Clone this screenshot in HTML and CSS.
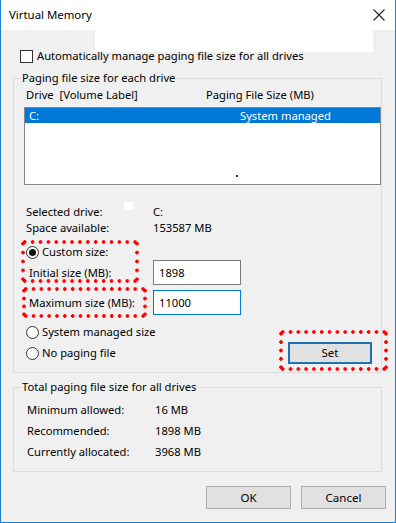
FILE: index.html
```html
<!DOCTYPE html>
<html>
<head>
<meta charset="utf-8">
<link rel="stylesheet" href="styles.css">
</head>
<body>
<div class="window">
  <div class="titlebar">
    <span class="title">Virtual Memory</span>
    <svg class="close" width="12" height="12" viewBox="0 0 12 12"><path d="M0.5 0.5 L11.5 11.5 M11.5 0.5 L0.5 11.5" stroke="#222" stroke-width="1.1" fill="none"/></svg>
  </div>
  <div class="mask"></div>
  <div class="content">
    <div class="check-row"><span class="checkbox"></span><span>Automatically manage paging file size for all drives</span></div>

    <fieldset class="group g1">
      <legend>Paging file size for each drive</legend>
      <div class="list-head"><span class="h1">Drive&nbsp; [Volume Label]</span><span>Paging File Size (MB)</span></div>
      <div class="list">
        <div class="item sel"><span class="i1">C:</span><span>System managed</span></div>
        <div class="speck-row"><span class="speck"></span></div>
      </div>
      <div class="info">
        <div class="kv"><span class="k">Selected drive:</span><span>C:</span></div>
        <div class="kv"><span class="k">Space available:</span><span>153587 MB</span></div>
      </div>
      <div class="radio-row custom"><span class="radio on"></span><span>Custom size:</span></div>
      <div class="field-row"><span class="fk">Initial size (MB):</span><span class="input">1898</span></div>
      <div class="field-row second"><span class="fk">Maximum size (MB):</span><span class="input focus">11000</span></div>
      <div class="bottom-row">
        <div class="radios">
          <div class="radio-row"><span class="radio"></span><span>System managed size</span></div>
          <div class="radio-row"><span class="radio"></span><span>No paging file</span></div>
        </div>
        <button class="btn set">Set</button>
      </div>
    </fieldset>

    <fieldset class="group g2">
      <legend>Total paging file size for all drives</legend>
      <div class="tot"><span class="tk">Minimum allowed:</span><span>16 MB</span></div>
      <div class="tot"><span class="tk">Recommended:</span><span>1898 MB</span></div>
      <div class="tot"><span class="tk">Currently allocated:</span><span>3968 MB</span></div>
    </fieldset>

    <div class="actions">
      <button class="btn">OK</button>
      <button class="btn">Cancel</button>
    </div>
  </div>

  <span class="blot"></span>
  <span class="hl hl1"></span>
  <span class="hl hl2"></span>
  <span class="hl hl3"></span>
</div>
</body>
</html>
```

FILE: styles.css
```css
* { box-sizing: border-box; }
html, body { margin: 0; padding: 0; background: #fff; }
body {
  font-family: "Noto Sans", "DejaVu Sans", sans-serif;
  font-size: 11.2px;
  line-height: 16px;
  color: #000;
}
.window {
  position: relative;
  width: 396px;
  height: 523px;
  background: #f0f0f0;
  border: 1px solid #1883d7;
  border-top: none;
  overflow: hidden;
}
.titlebar {
  height: 30px;
  background: #fff;
  display: flex;
  align-items: center;
  justify-content: space-between;
  padding: 0 10px 0 8px;
}
.title { font-size: 11.4px; }
.close { display: block; margin-top: -1px; }
.mask {
  position: absolute;
  left: 94px;
  top: 30px;
  width: 278px;
  height: 22px;
  background: #fff;
}
.content { position: relative; }

.check-row {
  position: relative;
  display: flex;
  align-items: center;
  gap: 4px;
  height: 16px;
  margin: 18px 0 0 19px;
}
.checkbox {
  width: 13px;
  height: 13px;
  border: 1px solid #333;
  background: #fff;
}

.group {
  margin: 6px 13px 0 12px;
  padding: 0;
  min-width: 0;
  border: 1px solid #dcdcdc;
}
.group legend {
  margin-left: 7px;
  padding: 0 1px;
  line-height: 16px;
}
.g1 { padding-bottom: 8px; }

.list-head {
  display: flex;
  height: 16px;
  margin-top: 1px;
  padding-left: 12px;
}
.h1 { width: 180px; white-space: pre; }
.list {
  margin: 4px 0 0 10px;
  height: 78px;
  background: #fff;
  border: 1px solid #828790;
}
.item {
  display: flex;
  height: 15px;
  line-height: 15px;
  padding-left: 4px;
}
.item.sel { background: #0078d7; color: #fff; }
.i1 { width: 211px; }
.speck-row { display: flex; padding: 52px 0 0 211px; }
.speck { width: 2px; height: 2px; background: #333; }

.info { margin-top: 19px; }
.kv { display: flex; height: 16px; padding-left: 12px; }
.k { width: 127px; }

.radio-row {
  display: flex;
  align-items: center;
  gap: 3px;
  height: 16px;
}
.custom { margin-top: 8px; padding-left: 12px; }
.radio {
  width: 13px;
  height: 13px;
  border: 1px solid #333;
  border-radius: 50%;
  background: #fff;
  display: flex;
  align-items: center;
  justify-content: center;
}
.radio.on::after {
  content: "";
  width: 7px;
  height: 7px;
  border-radius: 50%;
  background: #111;
}

.field-row {
  display: flex;
  align-items: center;
  height: 25px;
  padding-left: 15px;
}
.field-row.second { margin-top: 5px; }
.fk { width: 124px; }
.input {
  width: 88px;
  height: 25px;
  border: 1px solid #7a7a7a;
  background: #fff;
  padding-left: 5px;
  line-height: 23px;
}
.input.focus { border-color: #0078d7; }

.bottom-row {
  display: flex;
  justify-content: space-between;
  align-items: flex-end;
  margin-top: 9px;
}
.radios {
  display: flex;
  flex-direction: column;
  gap: 5px;
  padding: 0 0 3px 12px;
}

.btn {
  font: inherit;
  font-size: 11.5px;
  color: #000;
  width: 85px;
  height: 23px;
  padding: 0;
  background: #e1e1e1;
  border: 1px solid #adadad;
}
.btn.set {
  width: 84px;
  height: 22px;
  margin-right: 9px;
  border: 2px solid #1e72b4;
}

.g2 { padding-bottom: 11px; }
.tot { display: flex; height: 16px; padding-left: 13px; margin-top: 5px; }
.g2 legend + .tot { margin-top: 7px; }
.tk { width: 128px; }

.actions {
  display: flex;
  justify-content: flex-end;
  gap: 10px;
  margin-top: 14px;
  padding-right: 9px;
}

.blot {
  position: absolute;
  left: 123px;
  top: 202px;
  width: 9px;
  height: 8px;
  background: #fff;
}
.hl {
  position: absolute;
  background-image:
    radial-gradient(circle, #f00 1.5px, rgba(255,0,0,0) 2.1px),
    radial-gradient(circle, #f00 1.5px, rgba(255,0,0,0) 2.1px),
    radial-gradient(circle, #f00 1.5px, rgba(255,0,0,0) 2.1px),
    radial-gradient(circle, #f00 1.5px, rgba(255,0,0,0) 2.1px);
  background-size: 7.4px 4px, 7.4px 4px, 4px 7.4px, 4px 7.4px;
  background-position: 0 0, 0 100%, 0 0, 100% 0;
  background-repeat: space no-repeat, space no-repeat, no-repeat space, no-repeat space;
}
.hl1 { left: 20px; top: 240px; width: 118px; height: 43px; }
.hl2 { left: 21px; top: 287px; width: 125px; height: 31px; }
.hl3 { left: 278px; top: 330px; width: 109px; height: 41px; }
```
